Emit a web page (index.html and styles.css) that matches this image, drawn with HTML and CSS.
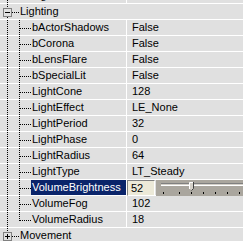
FILE: index.html
```html
<!DOCTYPE html>
<html>
<head>
<meta charset="utf-8">
<link rel="stylesheet" href="styles.css">
</head>
<body>
<div class="grid">
  <div class="row">
    <div class="name"><div class="gutter child last"></div><div class="label">LightSaturation</div></div>
    <div class="value">255</div>
  </div>
  <div class="row cat">
    <div class="cgutter"><div class="box minus"></div></div><div class="label">Lighting</div>
  </div>
  <div class="row"><div class="name"><div class="gutter child"></div><div class="label">bActorShadows</div></div><div class="value">False</div></div>
  <div class="row"><div class="name"><div class="gutter child"></div><div class="label">bCorona</div></div><div class="value">False</div></div>
  <div class="row"><div class="name"><div class="gutter child"></div><div class="label">bLensFlare</div></div><div class="value">False</div></div>
  <div class="row"><div class="name"><div class="gutter child"></div><div class="label">bSpecialLit</div></div><div class="value">False</div></div>
  <div class="row"><div class="name"><div class="gutter child"></div><div class="label">LightCone</div></div><div class="value">128</div></div>
  <div class="row"><div class="name"><div class="gutter child"></div><div class="label">LightEffect</div></div><div class="value">LE_None</div></div>
  <div class="row"><div class="name"><div class="gutter child"></div><div class="label">LightPeriod</div></div><div class="value">32</div></div>
  <div class="row"><div class="name"><div class="gutter child"></div><div class="label">LightPhase</div></div><div class="value">0</div></div>
  <div class="row"><div class="name"><div class="gutter child"></div><div class="label">LightRadius</div></div><div class="value">64</div></div>
  <div class="row"><div class="name"><div class="gutter child"></div><div class="label">LightType</div></div><div class="value">LT_Steady</div></div>
  <div class="row">
    <div class="name"><div class="gutter child"></div><div class="label selected">VolumeBrightness</div></div>
    <div class="value slidercell">
      <div class="edit">52</div>
      <div class="trackbar">
        <div class="groove"></div>
        <div class="ticks"></div>
        <svg class="thumb" width="5" height="9" viewBox="0 0 5 9">
          <path d="M0.5 0.5 H4.5 V6.5 L2.5 8.5 L0.5 6.5 Z" fill="#d4d0c8" stroke="none"/>
          <path d="M0.5 7 V0.5 H4" fill="none" stroke="#fff"/>
          <path d="M4.5 0 V6.5 L2.5 8.5" fill="none" stroke="#404040"/>
        </svg>
      </div>
    </div>
  </div>
  <div class="row"><div class="name"><div class="gutter child"></div><div class="label">VolumeFog</div></div><div class="value">102</div></div>
  <div class="row"><div class="name"><div class="gutter child last"></div><div class="label">VolumeRadius</div></div><div class="value">18</div></div>
  <div class="row cat">
    <div class="cgutter"><div class="box plus"></div></div><div class="label">Movement</div>
  </div>
</div>
</body>
</html>
```

FILE: styles.css
```css
html, body {
  margin: 0;
  padding: 0;
  background: #e0e0e0;
  overflow: hidden;
}

.grid {
  --dotv: repeating-linear-gradient(to bottom, #000 0 1px, transparent 1px 2px);
  --doth: repeating-linear-gradient(to right, #000 0 1px, transparent 1px 2px);
  margin-top: -12px;
  width: 243px;
  font-family: "Liberation Sans", Arial, sans-serif;
  font-size: 11px;
  line-height: 15px;
  color: #000;
}

.row {
  display: flex;
  height: 15px;
  border-bottom: 1px solid #fff;
}

.name {
  width: 126px;
  flex: none;
  display: flex;
}

.gutter {
  width: 31px;
  flex: none;
}

.gutter.child {
  background:
    var(--dotv) 7px 0 / 1px 100% no-repeat,
    var(--dotv) 19px 0 / 1px 100% no-repeat,
    var(--doth) 20px 8px / 11px 1px no-repeat;
}

.gutter.child.last {
  background:
    var(--dotv) 7px 0 / 1px 100% no-repeat,
    var(--dotv) 19px 0 / 1px 9px no-repeat,
    var(--doth) 20px 8px / 11px 1px no-repeat;
}

.label {
  flex: 1;
  padding-left: 1px;
  white-space: nowrap;
  overflow: hidden;
}

.label.selected {
  background: #0a246a;
  color: #fff;
}

.cat .label {
  padding-left: 0;
}

.cgutter {
  width: 20px;
  flex: none;
  box-sizing: border-box;
  padding: 4px 0 0 3px;
  background:
    var(--dotv) 7px 0 / 1px 4px no-repeat,
    var(--dotv) 7px 13px / 1px 2px no-repeat,
    var(--doth) 12px 8px / 8px 1px no-repeat;
}

.box {
  width: 9px;
  height: 9px;
  box-sizing: border-box;
  border: 1px solid #808080;
}

.box.minus {
  background: linear-gradient(#000, #000) center / 5px 1px no-repeat;
}

.box.plus {
  background:
    linear-gradient(#000, #000) center / 5px 1px no-repeat,
    linear-gradient(#000, #000) center / 1px 5px no-repeat;
}

.value {
  flex: 1;
  border-left: 1px solid #fff;
  padding-left: 5px;
  white-space: nowrap;
  overflow: hidden;
}

.slidercell {
  padding-left: 0;
  display: flex;
  height: 16px;
  overflow: visible;
}

.edit {
  width: 28px;
  height: 16px;
  flex: none;
  box-sizing: border-box;
  border: 1px solid;
  border-color: #808080 #fff #fff #808080;
  background: #ece9d8;
  padding-left: 3px;
  line-height: 14px;
}

.trackbar {
  flex: 1;
  margin-left: 1px;
  height: 16px;
  position: relative;
  background: #aaa69e;
  padding: 3px 0 0 5px;
  box-sizing: border-box;
}

.groove {
  height: 1px;
  border-top: 1px solid #808080;
  border-bottom: 1px solid #fff;
  background: #d4d0c8;
}

.ticks {
  margin: 6px 0 0 -5px;
  height: 2px;
  background:
    linear-gradient(#000, #000) 7px 0 / 1px 2px no-repeat,
    repeating-linear-gradient(to right, #000 0 1px, transparent 1px 12px) 23px 0 / 100% 2px no-repeat;
}

.thumb {
  position: absolute;
  left: 33px;
  top: 2px;
}
```
